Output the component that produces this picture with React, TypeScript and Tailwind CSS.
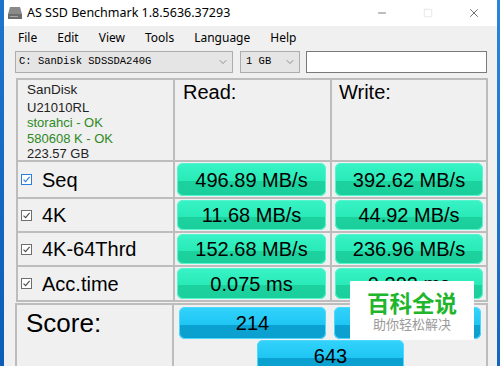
import { ChevronDown, Minus, Square, X } from 'lucide-react';

const rows = [
    { name: 'Seq', read: '496.89 MB/s', write: '392.62 MB/s', h: 'h-[35px]', active: true },
    { name: '4K', read: '11.68 MB/s', write: '44.92 MB/s', h: 'h-[32px]', active: false },
    { name: '4K-64Thrd', read: '152.68 MB/s', write: '236.96 MB/s', h: 'h-[32px]', active: false },
    { name: 'Acc.time', read: '0.075 ms', write: '0.202 ms', h: 'h-[33px]', active: false },
];

function Check({ active }: { active: boolean }) {
    return (
        <span
            className={`flex h-[11px] w-[11px] items-center justify-center border bg-white ${
                active ? 'border-[#2b7de0]' : 'border-[#6e6e6e]'
            }`}
        >
            <svg width="9" height="9" viewBox="0 0 9 9">
                <path d="M1.5 4.6 L3.6 6.7 L7.6 1.8" fill="none" stroke={active ? '#2b7de0' : '#4a4a4a'} strokeWidth="1.1" />
            </svg>
        </span>
    );
}

function Bar({ value, blue = false }: { value: string; blue?: boolean }) {
    return (
        <div
            className={`flex h-full w-full items-center justify-center rounded-[6px] text-[20px] text-black ${
                blue
                    ? 'bg-[linear-gradient(to_bottom,#33d3fb_0%,#1fc6f4_55%,#0aa2d2_56%,#0b9fcf_100%)] shadow-[inset_0_0_0_1px_#4fd8fb]'
                    : 'bg-[linear-gradient(to_bottom,#38f3c6_0%,#2aeab8_55%,#1cd29e_56%,#1bcf9b_100%)] shadow-[inset_0_0_0_1px_#55f5cf]'
            }`}
        >
            {value}
        </div>
    );
}

export default function App() {
    return (
        <div className="flex h-[366px] w-[500px] overflow-hidden bg-[#1769c4] font-['Liberation_Sans',Arial,sans-serif]">
            <div className="w-[4px] shrink-0 bg-[linear-gradient(to_bottom,#1f74cc,#0b5db8)]" />
            <div className="relative flex w-[493px] shrink-0 flex-col overflow-hidden bg-[#f0f0f0]">
                {/* Title bar */}
                <div className="flex h-[26px] shrink-0 items-center bg-white">
                    <svg width="16" height="14" viewBox="0 0 16 14" className="ml-[3px]">
                        <path d="M3 1 H13 L15 8 H1 Z" fill="#8a8a8a" />
                        <rect x="1" y="8" width="14" height="5" fill="#6d6d6d" />
                        <rect x="3" y="10" width="8" height="1" fill="#a8a8a8" />
                    </svg>
                    <span className="ml-[4px] font-['Noto_Sans',sans-serif] text-[12.5px] text-black">
                        AS SSD Benchmark 1.8.5636.37293
                    </span>
                    <div className="ml-auto flex h-full">
                        <div className="flex w-[46px] items-center justify-center text-[#222]">
                            <Minus size={12} strokeWidth={1.2} />
                        </div>
                        <div className="flex w-[46px] items-center justify-center text-[#cfcfcf]">
                            <Square size={10} strokeWidth={1.2} />
                        </div>
                        <div className="flex w-[46px] items-center justify-center text-[#222]">
                            <X size={14} strokeWidth={1.1} />
                        </div>
                    </div>
                </div>

                {/* Menu */}
                <div className="flex h-[24px] shrink-0 items-center gap-[20px] pl-[14px] font-['Noto_Sans',sans-serif] text-[12px] text-black">
                    <span>File</span>
                    <span>Edit</span>
                    <span>View</span>
                    <span>Tools</span>
                    <span>Language</span>
                    <span>Help</span>
                </div>

                {/* Toolbar */}
                <div className="mt-[1px] flex h-[22px] shrink-0 items-stretch pl-[11px]">
                    <div className="flex w-[218px] items-center border border-[#adadad] bg-[#e5e5e5] pl-[3px] pr-[3px] font-['Liberation_Mono',monospace] text-[10.5px] text-black">
                        <span>C: SanDisk SDSSDA240G</span>
                        <ChevronDown size={12} strokeWidth={1.2} className="ml-auto text-[#555]" />
                    </div>
                    <div className="ml-[7px] flex w-[60px] items-center border border-[#adadad] bg-[#e5e5e5] pl-[5px] pr-[3px] font-['Liberation_Mono',monospace] text-[10.5px] text-black">
                        <span>1 GB</span>
                        <ChevronDown size={12} strokeWidth={1.2} className="ml-auto text-[#555]" />
                    </div>
                    <div className="ml-[6px] w-[181px] border border-[#7a7a7a] bg-white" />
                </div>

                {/* Results table */}
                <div className="ml-[12px] mt-[5px] grid w-[472px] shrink-0 grid-cols-[155px_155px_154px] gap-[2px] bg-[#bdbdbd] p-[2px] pb-0">
                    <div className="flex h-[80px] flex-col bg-[#f0f0f0] pl-[9px] pt-[2px] text-[13px] leading-[15.5px] text-[#222]">
                        <span className="mb-[2px] text-[13.5px]">SanDisk</span>
                        <span>U21010RL</span>
                        <span className="text-[#2d8a1e]">storahci - OK</span>
                        <span className="text-[#2d8a1e]">580608 K - OK</span>
                        <span>223.57 GB</span>
                    </div>
                    <div className="h-[80px] bg-[#f0f0f0] pl-[8px] pt-[1px] text-[20px] leading-[22px] text-black">Read:</div>
                    <div className="h-[80px] bg-[#f0f0f0] pl-[7px] pt-[1px] text-[20px] leading-[22px] text-black">Write:</div>
                    {rows.map((r) => (
                        <div key={r.name} className="contents">
                            <div className={`flex ${r.h} items-center gap-[10px] bg-[#f0f0f0] pl-[3px] text-[20px] text-black`}>
                                <Check active={r.active} />
                                <span>{r.name}</span>
                            </div>
                            <div className={`${r.h} bg-[#f0f0f0] py-[1px] pl-[2px] pr-[4px]`}>
                                <Bar value={r.read} />
                            </div>
                            <div className={`${r.h} bg-[#f0f0f0] py-[1px] pl-[3px] pr-[3px]`}>
                                <Bar value={r.write} />
                            </div>
                        </div>
                    ))}
                </div>
                <div className="ml-[12px] h-[2px] w-[472px] shrink-0 bg-[#bdbdbd]" />

                {/* Score */}
                <div className="ml-[11px] mt-[1px] flex h-[80px] w-[473px] shrink-0 border-l-2 border-r-2 border-t-2 border-[#bdbdbd]">
                    <div className="w-[157px] border-r-2 border-[#bdbdbd] pl-[9px] pt-[3px] text-[26px] leading-[30px] text-black">Score:</div>
                    <div className="flex flex-col pl-[5px] pt-[2px]">
                        <div className="flex h-[32px] gap-[8px]">
                            <div className="w-[147px]">
                                <Bar value="214" blue />
                            </div>
                            <div className="w-[147px]">
                                <Bar value="409" blue />
                            </div>
                        </div>
                        <div className="ml-[78px] mt-[1px] h-[32px] w-[147px]">
                            <Bar value="643" blue />
                        </div>
                    </div>
                </div>

                {/* Watermark */}
                <div className="absolute left-[346px] top-[281px] flex h-[59px] w-[124px] flex-col items-center justify-center bg-white font-['Noto_Sans_CJK_SC',sans-serif]">
                    <span className="text-[22.5px] font-bold leading-[26px] text-[#1fb52c]">百科全说</span>
                    <span className="mt-[1px] text-[13px] leading-[16px] text-[#9a9a9a]">助你轻松解决</span>
                </div>
            </div>
            <div className="flex-1 bg-[linear-gradient(to_bottom,#2a86d8,#1565bd)]" />
        </div>
    );
}
